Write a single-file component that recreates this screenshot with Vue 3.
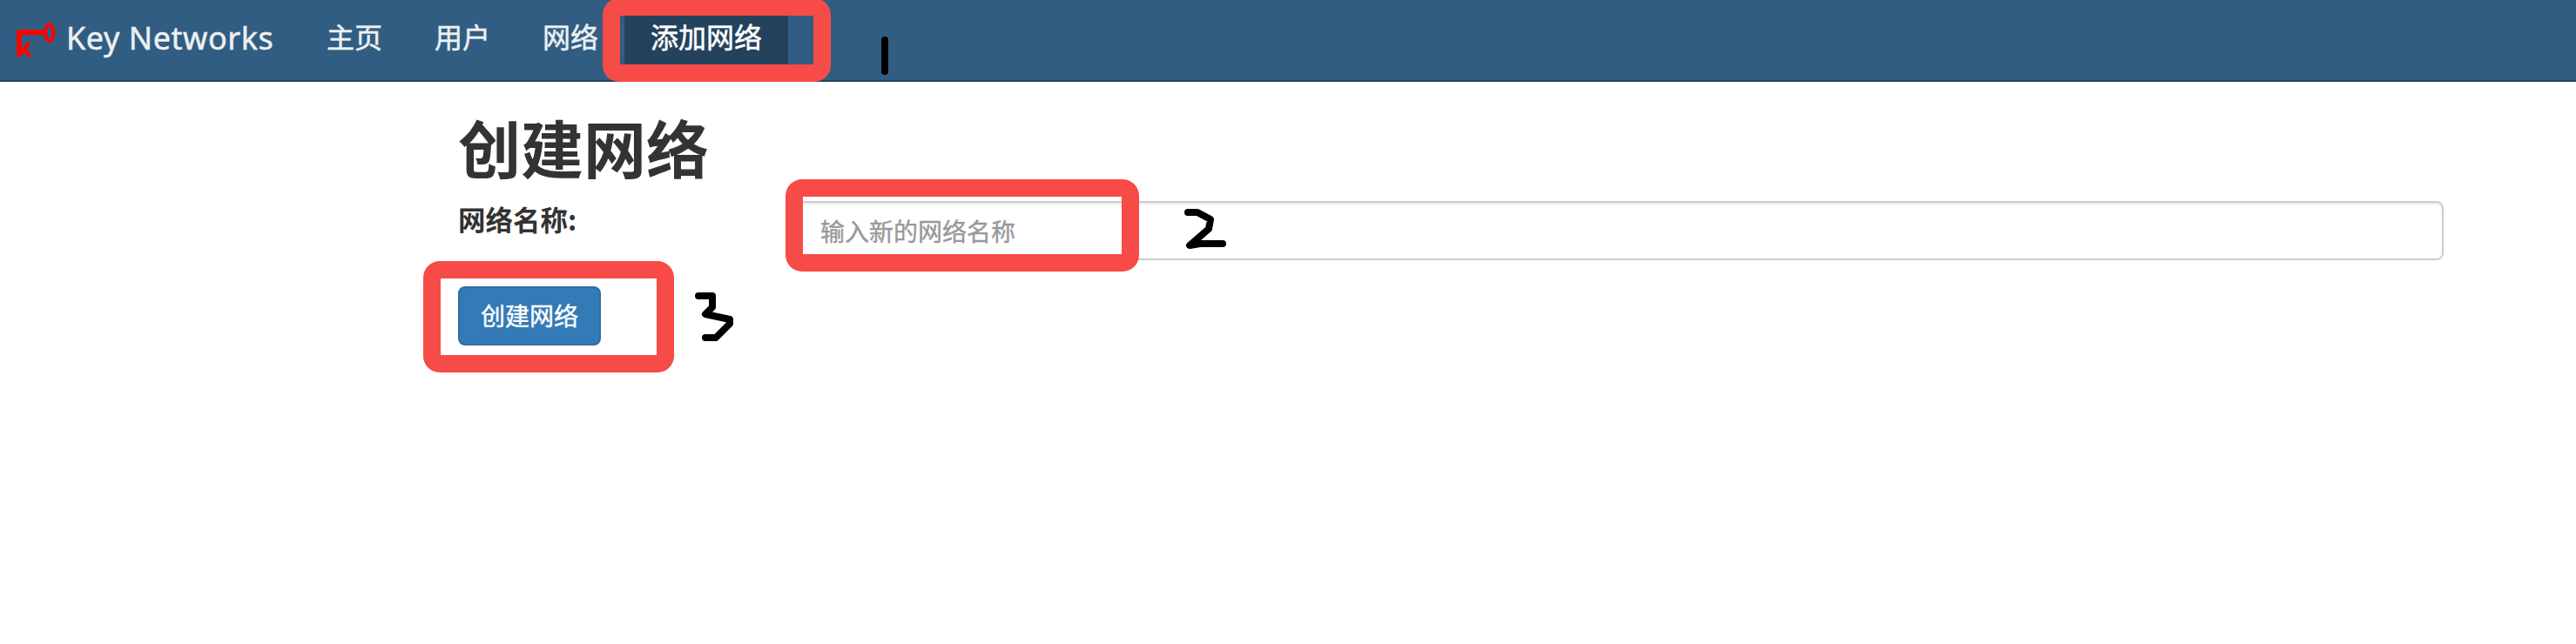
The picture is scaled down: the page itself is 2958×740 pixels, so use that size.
<script setup>
const navItems = [
  { label: '主页' },
  { label: '用户' },
  { label: '网络' },
  { label: '添加网络', active: true },
]
</script>

<template>
  <div class="page">
    <nav class="navbar">
      <a class="brand">
        <svg class="logo" width="46" height="42" viewBox="0 0 46 42" fill="none" stroke="#ff0000">
          <ellipse cx="38.7" cy="11.4" rx="4.700" ry="9.5" stroke-width="4" />
          <path d="M33 11.300H4V36.300" stroke-width="6" stroke-linejoin="round" stroke-linecap="round" />
          <path d="M7.500 34.500L14.500 24.500M9.500 30L15.500 37" stroke-width="4.500" stroke-linecap="round" />
        </svg>
        <span class="brand-name">Key Networks</span>
      </a>
      <a v-for="item in navItems" :key="item.label" class="nav-item" :class="{ active: item.active }">{{ item.label }}</a>
    </nav>

    <main class="content">
      <h1>创建网络</h1>
      <div class="form-row">
        <label for="name">网络名称:</label>
        <input id="name" type="text" placeholder="输入新的网络名称" />
      </div>
      <button type="button">创建网络</button>
    </main>

    <div class="mark mark-nav"></div>
    <div class="mark mark-input"></div>
    <div class="mark mark-button"></div>
    <svg class="ink" width="2958" height="740" viewBox="0 0 2958 740">
      <path d="M1016 46V82" />
      <path d="M1364 244H1375L1390 252L1388 263L1366 282L1378 280H1404" />
      <path d="M802 340H818V353L810 361L838 367V372L822 388H810" />
    </svg>
  </div>
</template>

<style>
body { margin: 0; background: #fff; }
</style>

<style scoped>
.page {
  position: relative;
  width: 2958px;
  height: 740px;
  overflow: hidden;
  background: #fff;
  color: #333;
  font-family: "Noto Sans", "Noto Sans CJK SC", sans-serif;
}
.navbar {
  display: flex;
  box-sizing: border-box;
  height: 94px;
  background: #325d82;
  border-bottom: 2px solid #24425c;
}
.brand {
  display: flex;
  box-sizing: border-box;
  width: 345px;
  padding-left: 18px;
  color: #ecf0f1;
}
.logo { flex: none; margin-top: 26px; }
.brand-name {
  margin-left: 12px;
  font-size: 36px;
  line-height: 88px;
  letter-spacing: 0.55px;
  white-space: nowrap;
  -webkit-text-stroke: 0.5px currentColor;
}
.nav-item {
  padding: 0 30px;
  font-family: "Noto Sans CJK SC", sans-serif;
  font-size: 32px;
  line-height: 83px;
  color: #ecf0f1;
  -webkit-text-stroke: 0.5px currentColor;
}
.nav-item.active { background: #24425c; color: #fff; }
.content {
  padding: 34px 152px 0 526px;
  font-family: "Noto Sans CJK SC", sans-serif;
}
h1 {
  margin: 0;
  font-size: 72px;
  line-height: 80px;
  font-weight: 600;
}
.form-row { display: flex; margin-top: 23px; }
label {
  width: 390px;
  font-size: 31.5px;
  line-height: 40px;
  font-weight: 700;
}
input {
  box-sizing: border-box;
  flex: 1;
  height: 68px;
  padding: 0 24px;
  border: 2px solid #ccc;
  border-radius: 8px;
  background: #fff;
  box-shadow: inset 0 2px 2px rgba(0, 0, 0, 0.075);
  font: 28px "Noto Sans CJK SC", sans-serif;
}
input::placeholder {
  color: #999;
  opacity: 1;
  -webkit-text-stroke: 0.4px currentColor;
}
button {
  display: block;
  box-sizing: border-box;
  width: 164px;
  height: 68px;
  margin-top: 30px;
  padding: 0 0 2px;
  border: 2px solid #2e6da4;
  border-radius: 8px;
  background: #337ab7;
  color: #fff;
  font: 28px "Noto Sans CJK SC", sans-serif;
  -webkit-text-stroke: 0.4px currentColor;
}
.mark {
  position: absolute;
  box-sizing: border-box;
  border: 20px solid #f74b47;
  border-radius: 19px;
}
.mark-nav { left: 692px; top: -2px; width: 262px; height: 96px; }
.mark-input { left: 902px; top: 206px; width: 406px; height: 106px; }
.mark-button { left: 486px; top: 300px; width: 288px; height: 128px; }
.ink {
  position: absolute;
  left: 0;
  top: 0;
  fill: none;
  stroke: #000;
  stroke-width: 8px;
  stroke-linecap: round;
  stroke-linejoin: round;
  pointer-events: none;
}
</style>
